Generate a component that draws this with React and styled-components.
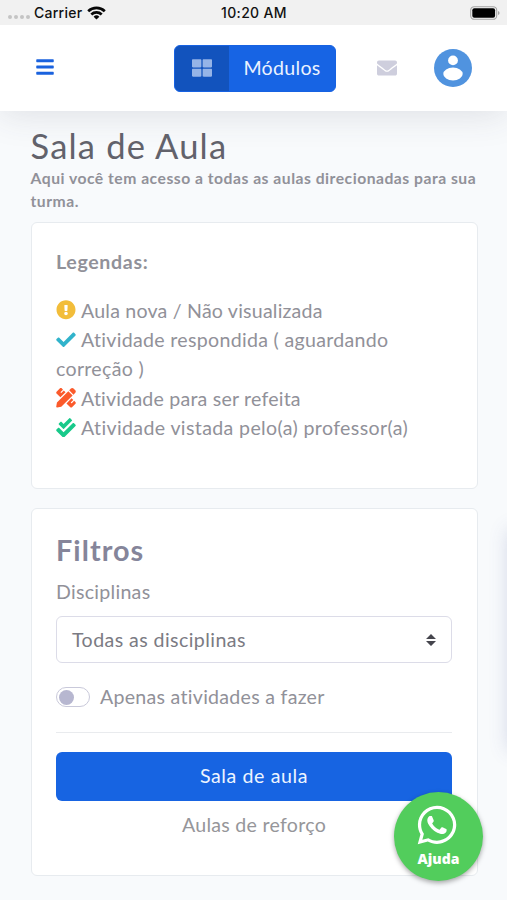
import React from "react";
import styled, { createGlobalStyle } from "styled-components";
import {
  FaBars,
  FaCheck,
  FaCheckDouble,
  FaEnvelope,
  FaExclamationCircle,
  FaPencilRuler,
  FaThLarge,
  FaWhatsapp,
} from "react-icons/fa";

const GlobalStyle = createGlobalStyle`
  * { box-sizing: border-box; }
  html, body { margin: 0; padding: 0; background: #f8fafc; }
  body { font-family: Lato, "Open Sans", sans-serif; font-size: 19.6px; line-height: 29.3px; color: #919199; }
  h1, h2, p { margin: 0; }
`;

const Screen = styled.div`
  position: relative;
  height: 900px;
  overflow: hidden;
  display: flex;
  flex-direction: column;
  background: #f8fafc;
`;

const StatusBar = styled.div`
  flex: none;
  height: 25px;
  padding: 0 7px 0 8px;
  display: grid;
  grid-template-columns: 1fr auto 1fr;
  align-items: center;
  background: #f1f1f1;
  color: #111;
  font: 500 14px/25px Inter, sans-serif;
  z-index: 1;
`;

const Carrier = styled.div`
  display: flex;
  align-items: center;
  letter-spacing: 0.25px;
  svg { margin-left: 5px; }
`;

const SignalDots = styled.span`
  display: flex;
  gap: 2px;
  margin: 9px 4px 0 0;
  i { width: 4px; height: 4px; border-radius: 50%; background: #c4c4c4; }
`;

const Clock = styled.div`
  letter-spacing: 0.35px;
`;

const Battery = styled.svg`
  justify-self: end;
`;

const Header = styled.header`
  flex: none;
  height: 86px;
  padding: 0 35px 0 35px;
  display: flex;
  align-items: center;
  background: #fff;
  box-shadow: 0 2px 36px rgba(58, 62, 78, 0.15);
`;

const MenuButton = styled.button`
  display: flex;
  padding: 0 0 3px;
  border: 0;
  background: none;
  color: #1a62de;
`;

const ModulesButton = styled.button`
  display: flex;
  width: 162px;
  height: 47px;
  margin-left: 119px;
  padding: 0;
  border: 1px solid #1762e2;
  border-radius: 6px;
  overflow: hidden;
  background: #1764e4;
  color: #eaf2ff;
  font: inherit;
  letter-spacing: 0.3px;
`;

const ModulesIcon = styled.span`
  width: 54px;
  height: 100%;
  padding-bottom: 1px;
  display: flex;
  align-items: center;
  justify-content: center;
  background: #1253bd;
  color: #95b4e7;
`;

const ModulesLabel = styled.span`
  flex: 1;
  align-self: center;
  text-align: center;
`;

const MailIcon = styled(FaEnvelope)`
  margin-left: 41px;
  color: #cecedd;
`;

const Avatar = styled.svg`
  margin-left: auto;
`;

const Content = styled.main`
  padding: 13.5px 29.5px 0 30.5px;
`;

const Title = styled.h1`
  padding-bottom: 1px;
  font-size: 34.5px;
  line-height: 41px;
  font-weight: 400;
  letter-spacing: 1.2px;
  color: #62626b;
`;

const Subtitle = styled.p`
  font-size: 15.7px;
  line-height: 23.5px;
  font-weight: 700;
  letter-spacing: 0.5px;
  white-space: nowrap;
`;

const Card = styled.section`
  height: ${(p) => p.$height}px;
  margin-top: ${(p) => p.$gap}px;
  padding: 24px 24.5px;
  border: 1px solid #e7ebef;
  border-radius: 6px;
  background: #fff;
`;

const LegendTitle = styled.p`
  margin-bottom: 19.4px;
  font-weight: 700;
  letter-spacing: 0.65px;
`;

const LegendItem = styled.div`
  letter-spacing: ${(p) => p.$track}px;
  white-space: nowrap;
  svg {
    width: 20px;
    height: 19.6px;
    margin-right: 5px;
    vertical-align: -2.4px;
    color: ${(p) => p.$color};
  }
`;

const FilterTitle = styled.h2`
  margin-bottom: 8.8px;
  font-size: 28.8px;
  line-height: 35.3px;
  font-weight: 700;
  letter-spacing: 1.05px;
  color: #85859a;
`;

const Label = styled.div`
  letter-spacing: 0.27px;
`;

const SelectBox = styled.div`
  height: 47px;
  margin-top: 10px;
  padding: 0 15px;
  display: flex;
  align-items: center;
  justify-content: space-between;
  border: 1.5px solid #dcdce8;
  border-radius: 6px;
  color: #7b7b83;
  letter-spacing: 0.42px;
`;

const SwitchRow = styled.div`
  margin-top: 19px;
  display: flex;
  align-items: center;
  gap: 10px;
  letter-spacing: 0.27px;
`;

const Switch = styled.span`
  width: 34px;
  height: 20px;
  padding: 2px;
  border: 1.5px solid #c9c9da;
  border-radius: 10px;
  &::before {
    content: "";
    display: block;
    width: 15px;
    height: 15px;
    border-radius: 50%;
    background: #b7b7d0;
  }
`;

const Divider = styled.hr`
  margin: 20px 0 19.5px;
  border: 0;
  border-top: 1px solid #e9ebee;
`;

const Tab = styled.div`
  height: 49px;
  line-height: 48px;
  border-radius: 6px;
  text-align: center;
  background: ${(p) => (p.$active ? "#1764e2" : "transparent")};
  color: ${(p) => (p.$active ? "#edf4ff" : "#96969a")};
  letter-spacing: ${(p) => (p.$active ? 0.6 : 0.27)}px;
`;

const SideShadow = styled.div`
  position: absolute;
  left: 509px;
  top: 530px;
  width: 60px;
  height: 220px;
  box-shadow: 0 0 20px rgba(70, 80, 150, 0.22);
`;

const HelpButton = styled.button`
  position: absolute;
  left: 394px;
  top: 792px;
  width: 89px;
  height: 89px;
  padding: 11px 0 0;
  display: flex;
  flex-direction: column;
  align-items: center;
  border: 0;
  border-radius: 50%;
  background: #52cd5c;
  box-shadow: 0 2px 5px rgba(0, 0, 0, 0.35);
  color: #fff;
  font: 800 14px/20px "Open Sans", sans-serif;
  svg { margin-right: 4px; }
`;

const HelpLabel = styled.span`
  margin-top: 1.5px;
`;

const legends = [
  { icon: FaExclamationCircle, color: "#f2bd3a", track: 0.2, text: "Aula nova / Não visualizada" },
  { icon: FaCheck, color: "#31b3cb", track: 0.3, text: <>Atividade respondida ( aguardando<br />correção )</> },
  { icon: FaPencilRuler, color: "#fb5a2b", track: 0.2, text: "Atividade para ser refeita" },
  { icon: FaCheckDouble, color: "#18c98a", track: 0.36, text: "Atividade vistada pelo(a) professor(a)" },
];

export default function App() {
  return (
    <Screen>
      <GlobalStyle />
      <StatusBar>
        <Carrier>
          <SignalDots><i /><i /><i /><i /></SignalDots>
          Carrier
          <svg width="19" height="14" viewBox="0 0 19 14" fill="none" stroke="#080808" strokeWidth="2.7">
            <path d="M1.2 5.2a12 12 0 0 1 16.6 0" />
            <path d="M4.3 8.4a7.6 7.6 0 0 1 10.4 0" />
            <path d="M9.5 13.6 6.6 10.7a4.2 4.2 0 0 1 5.8 0Z" fill="#080808" stroke="none" />
          </svg>
        </Carrier>
        <Clock>10:20 AM</Clock>
        <Battery width="30" height="14" viewBox="0 0 30 14">
          <rect x="0.7" y="0.7" width="26" height="12.6" rx="3.6" fill="#f4f4f4" stroke="#a4a4a4" strokeWidth="1.1" />
          <rect x="2.3" y="2.3" width="22.8" height="9.4" rx="2" fill="#000" />
          <path d="M28 5v4q1.6-.6 1.6-2T28 5Z" fill="#a4a4a4" />
        </Battery>
      </StatusBar>

      <Header>
        <MenuButton aria-label="Menu">
          <FaBars size={20} />
        </MenuButton>
        <ModulesButton>
          <ModulesIcon><FaThLarge size={20} /></ModulesIcon>
          <ModulesLabel>Módulos</ModulesLabel>
        </ModulesButton>
        <MailIcon size={20} />
        <Avatar width="38" height="38" viewBox="0 0 38 38">
          <circle cx="19" cy="19" r="19" fill="#5093df" />
          <circle cx="19" cy="11.4" r="4.9" fill="#fff" />
          <ellipse cx="19" cy="25" rx="9.7" ry="6.4" fill="#fff" />
        </Avatar>
      </Header>

      <Content>
        <Title>Sala de Aula</Title>
        <Subtitle>
          Aqui você tem acesso a todas as aulas direcionadas para sua
          <br />
          turma.
        </Subtitle>

        <Card $height={267} $gap={8.5}>
          <LegendTitle>Legendas:</LegendTitle>
          {legends.map(({ icon: Icon, color, track, text }) => (
            <LegendItem key={color} $color={color} $track={track}>
              <Icon />
              {text}
            </LegendItem>
          ))}
        </Card>

        <Card $height={368} $gap={19}>
          <FilterTitle>Filtros</FilterTitle>
          <Label>Disciplinas</Label>
          <SelectBox>
            Todas as disciplinas
            <svg width="10" height="12" viewBox="0 0 10 12" fill="#45454d">
              <path d="M5 0 10 5H0ZM5 12 0 7h10Z" />
            </svg>
          </SelectBox>
          <SwitchRow>
            <Switch />
            Apenas atividades a fazer
          </SwitchRow>
          <Divider />
          <Tab $active>Sala de aula</Tab>
          <Tab>Aulas de reforço</Tab>
        </Card>
      </Content>

      <SideShadow />
      <HelpButton>
        <FaWhatsapp size={44} />
        <HelpLabel>Ajuda</HelpLabel>
      </HelpButton>
    </Screen>
  );
}
